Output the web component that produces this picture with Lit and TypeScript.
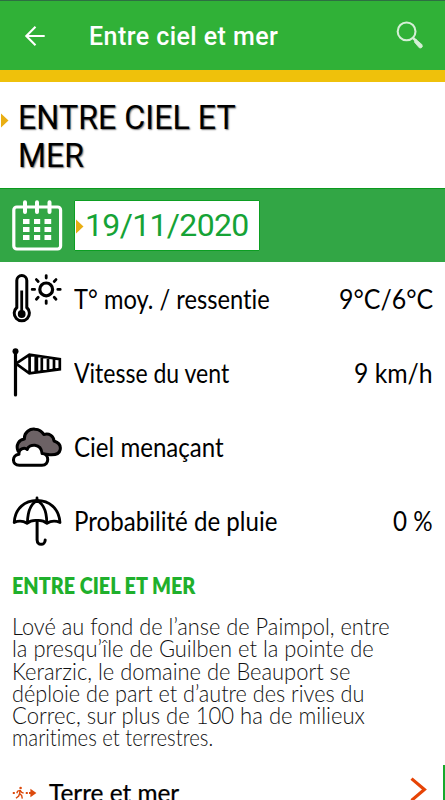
import { LitElement, html, css, svg } from "lit";
import { customElement, property } from "lit/decorators.js";

/** A single line of text that fills the given width, by tracking or by condensing its glyphs. */
@customElement("tracked-line")
class TrackedLine extends LitElement {
  @property() text = "";
  @property({ type: Number }) width = 0;
  @property({ type: Boolean }) condense = false;

  static styles = css`
    :host { display: block; white-space: pre; font-variant-ligatures: none; }
    .line { display: inline-block; vertical-align: top; transform-origin: left center; }
  `;

  updated() {
    const line = this.renderRoot.querySelector(".line") as HTMLElement;
    const natural = line.offsetWidth;
    if (this.condense) {
      line.style.transform = `scaleX(${(this.width / natural).toFixed(4)})`;
      line.style.marginRight = `${this.width - natural}px`;
      return;
    }
    const gap = (this.width - natural) / Math.max(1, this.text.length - 1);
    line.style.letterSpacing = `${gap.toFixed(3)}px`;
    line.style.marginRight = `${(-gap).toFixed(3)}px`;
  }

  render() {
    return html`<span class="line">${this.text}</span>`;
  }
}

const thermometer = svg`
  <g fill="none" stroke="#000" stroke-width="3">
    <path d="M4.8 34.5V7.5a5 5 0 0 1 10 0V34.5a7.6 7.6 0 1 1-10 0Z"/>
    <path d="M9.7 17.5V40" stroke-width="2.8"/>
    <circle cx="34.2" cy="16.4" r="6.4" stroke-width="3.2"/>
    <path d="M34.2 2.6v2.4M34.2 27.8v2.6M20.2 16.4h2.4M45.8 16.4h2.4M24.4 6.6l1.8 1.9M44 6.6l-1.8 1.9M24.4 26.2l1.8-1.9M44 26.2l-1.8-1.9" stroke-linecap="round" stroke-width="2.8"/>
  </g>
  <circle cx="9.7" cy="41" r="3.9"/>`;

const windsock = svg`
  <circle cx="3.5" cy="4.2" r="3"/>
  <g fill="none" stroke="#000" stroke-width="2.7">
    <path d="M3.5 4V47.9" stroke-linecap="round" stroke-width="3.2"/>
    <path d="M4 16.7L17.4 7.6L47.8 12.2V22.2L17.4 26.4L4 16.7M17.6 7.7V26.3M24 9V25.6M29.8 9.8V24.8M36 10.6V24M42 11.4V23"/>
  </g>
  <path d="M22.6 8.5h3.6v16.8h-3.6z"/>`;

const clouds = svg`
  <g stroke="#000" stroke-width="3" stroke-linejoin="round" transform="translate(0 2)">
    <path fill="#6c6265" d="M6 28C3.5 22 7 16.5 12.4 16C12 9 18 5.5 23.2 6.2C28 6.4 30.5 9.3 31.8 11.5C37 10 41.7 12.6 42 18C46.5 19.5 49 22.5 48.2 26.6C47.4 31 42 32.3 36 31.6Z"/>
    <path fill="#fff" d="M7.3 42.3C-.4 42.3-.4 32 7 31.2C6.2 26 12.5 23.8 15.2 26.5C17 20.7 29 19.5 30.1 30.5C37.5 30.8 37.8 42.3 30 42.3Z"/>
  </g>`;

const umbrella = svg`
  <g fill="none" stroke="#000" stroke-width="2.8" stroke-linecap="round" stroke-linejoin="round" transform="translate(0 1)">
    <path d="M2.2 26.5C3 12 13 4.6 25 4.4C37 4.6 47 12 48 26.5Q41 23.5 35 27.3Q31 24 25 24.5Q19 24 15 27.3Q9 23.5 2.2 26.5Z"/>
    <path d="M25 2V4.4Q16 9 15.4 26.5M25 4.4Q34.5 9 34.8 26.5"/>
    <path d="M25.1 25V44C25.5 49.8 33 49.8 33.2 44" stroke-width="3"/>
  </g>`;

const rows = [
  { icon: thermometer, label: "T° moy. / ressentie", w: 196, value: "9°C/6°C", vw: 94 },
  { icon: windsock, label: "Vitesse du vent", w: 155, value: "9 km/h", vw: 79 },
  { icon: clouds, label: "Ciel menaçant", w: 150, value: "", vw: 0 },
  { icon: umbrella, label: "Probabilité de pluie", w: 203, value: "0 %", vw: 40 },
];

const paragraph: [string, number][] = [
  ["Lové au fond de l’anse de Paimpol, entre", 378],
  ["la presqu’île de Guilben et la pointe de", 362],
  ["Kerarzic, le domaine de Beauport se", 338],
  ["déploie de part et d’autre des rives du", 352],
  ["Correc, sur plus de 100 ha de milieux", 353],
  ["maritimes et terrestres.", 201],
];

@customElement("app-root")
class AppRoot extends LitElement {
  static styles = css`
    :host {
      display: block;
      height: 800px;
      overflow: hidden;
      background: #fff;
      color: #000;
      font-family: Lato, "Liberation Sans", sans-serif;
    }
    * { box-sizing: border-box; }
    svg { display: block; flex: none; }
    .bar {
      display: flex;
      align-items: center;
      height: 82px;
      padding: 0 19px 0 24px;
      background: #30b137;
      border-top: 1px solid #2d6f42;
      border-bottom: 12px solid #efc10b;
    }
    .screen {
      font: 500 25px/30px Roboto, sans-serif;
      color: #fff;
      margin: 2px 0 0 43px;
      flex: 1;
    }
    .search { margin-bottom: 2px; }
    .title {
      display: flex;
      height: 106px;
      padding-top: 17px;
      font: 400 33px/38px Roboto, sans-serif;
      text-shadow: 1px 1px 1.5px #777;
    }
    .marker { margin-top: 14px; margin-right: 9px; }
    .date {
      display: flex;
      align-items: center;
      height: 74px;
      padding-left: 12px;
      background: #32a645;
      border-top: 1px solid #0b9a1d;
    }
    .calendar { margin-bottom: 1px; }
    .day {
      display: flex;
      align-items: center;
      height: 51px;
      width: 186px;
      margin: 0 0 1px 11px;
      background: #fff;
      border: 1px solid #0c9e22;
      border-radius: 1px;
      font: 400 32px/50px Roboto, sans-serif;
      color: #16a336;
    }
    .day svg { margin: 2px 1px 0 1px; }
    .row {
      display: flex;
      align-items: center;
      height: 74px;
      padding: 0 12px 0 12px;
      font-size: 26px;
      line-height: 30px;
    }
    .label { margin-left: 11px; flex: 1; }
    .about { padding: 14px 11px 0 12px; }
    .heading {
      font-size: 22.5px;
      font-weight: 800;
      line-height: 27px;
      color: #1fb02c;
    }
    .text {
      margin-top: 16px;
      font-size: 23px;
      font-weight: 300;
      line-height: 22.3px;
      color: #111;
    }
    .link {
      display: flex;
      margin-top: 16px;
      height: 40px;
      padding-left: 12px;
    }
    .walker { margin-top: 21px; }
    .name {
      margin: 12px 0 0 11px;
      flex: 1;
      font-size: 25.5px;
      line-height: 30px;
      -webkit-text-stroke: 0.25px #000;
    }
    .next { margin: 11px 16px 0 0; }
    .edge { width: 2px; background: #17a92b; }
  `;

  render() {
    return html`
      <header class="bar">
        <svg width="22" height="22" viewBox="0 0 22 22" fill="none" stroke="#fff" stroke-width="2.1">
          <path d="M20.7 11H2.5M11.5 1.8L2.3 11L11.5 20.2" />
        </svg>
        <tracked-line class="screen" text="Entre ciel et mer" width="189"></tracked-line>
        <svg class="search" width="32" height="32" viewBox="0 0 32 32" fill="none" stroke="#d5efd6">
          <circle cx="12.6" cy="12.4" r="8.9" stroke-width="2.1" />
          <path d="M19 18.9l3 3" stroke-width="2.6" />
          <path d="M21.9 20.3L27.9 25.6L28.4 27.6L27.1 29L25.3 28.8L20.4 23.1Z" fill="#d5efd6" stroke-width=".8" stroke-linejoin="round" />
        </svg>
      </header>
      <section class="title">
        <svg class="marker" width="9" height="15" viewBox="0 0 9 15"><path d="M1 .5L8.5 7.5L1 14.5Z" fill="#e9ae13" /></svg>
        <div>
          <tracked-line text="ENTRE CIEL ET" width="218" condense></tracked-line>
          <tracked-line text="MER" width="66" condense></tracked-line>
        </div>
      </section>
      <section class="date">
        <svg class="calendar" width="51" height="51" viewBox="0 0 51 51" fill="none" stroke="#fff">
          <rect x="1.8" y="7" width="46.8" height="42" rx="3" stroke-width="3.2" />
          <path d="M13 2.2V12M25 2.2V12M37.5 2.2V12" stroke-width="4" stroke-linecap="round" />
          <path d="M11 21.5h6.5M22 21.5h6.2M32.5 21.5h6.7M11 29.5h6.5M22 29.5h6.2M32.5 29.5h6.7M11 37.5h6.5M22 37.5h6.2M32.5 37.5h6.7" stroke-width="5.2" />
        </svg>
        <div class="day">
          <svg width="8" height="15" viewBox="0 0 8 15"><path d="M0 .5L7.5 7.5L0 14.5Z" fill="#e9ae13" /></svg>
          <tracked-line text="19/11/2020" width="164"></tracked-line>
        </div>
      </section>
      ${rows.map(
        (r) => html`<div class="row">
          <svg width="51" height="52" viewBox="0 0 51 52">${r.icon}</svg>
          <tracked-line class="label" text=${r.label} width=${r.w} condense></tracked-line>
          ${r.value ? html`<tracked-line text=${r.value} width=${r.vw} condense></tracked-line>` : ""}
        </div>`
      )}
      <section class="about">
        <tracked-line class="heading" text="ENTRE CIEL ET MER" width="183" condense></tracked-line>
        <div class="text">
          ${paragraph.map(([t, w]) => html`<tracked-line text=${t} width=${w} condense></tracked-line>`)}
        </div>
      </section>
      <div class="link">
        <svg class="walker" width="26" height="14" viewBox="0 0 26 14" fill="none" stroke="#dc4a0c">
          <circle cx="8.6" cy="2" r="1.3" fill="#dc4a0c" stroke="none" />
          <path d="M8.2 4L7.6 7.6L9.7 9.5L10.3 12.6M7.6 7.6L6.7 10L4 12.3M8 4.3L5.6 5.2L4.8 7.3M8.3 4.6L9.8 6.5L11.6 7.1" stroke-width="1.4" />
          <path d="M.8 7h2M13.8 7h2M17 7h2" stroke-width="2" />
          <path d="M18.4 2.8L24.4 7L18.4 11.2Z" fill="#dc4a0c" stroke="none" />
        </svg>
        <tracked-line class="name" text="Terre et mer" width="130" condense></tracked-line>
        <svg class="next" width="17" height="28" viewBox="0 0 17 28" fill="none" stroke="#e64406" stroke-width="3.2">
          <path d="M1.5 2.6L14.4 13.5L1.5 24.4" />
        </svg>
        <div class="edge"></div>
      </div>
    `;
  }
}
